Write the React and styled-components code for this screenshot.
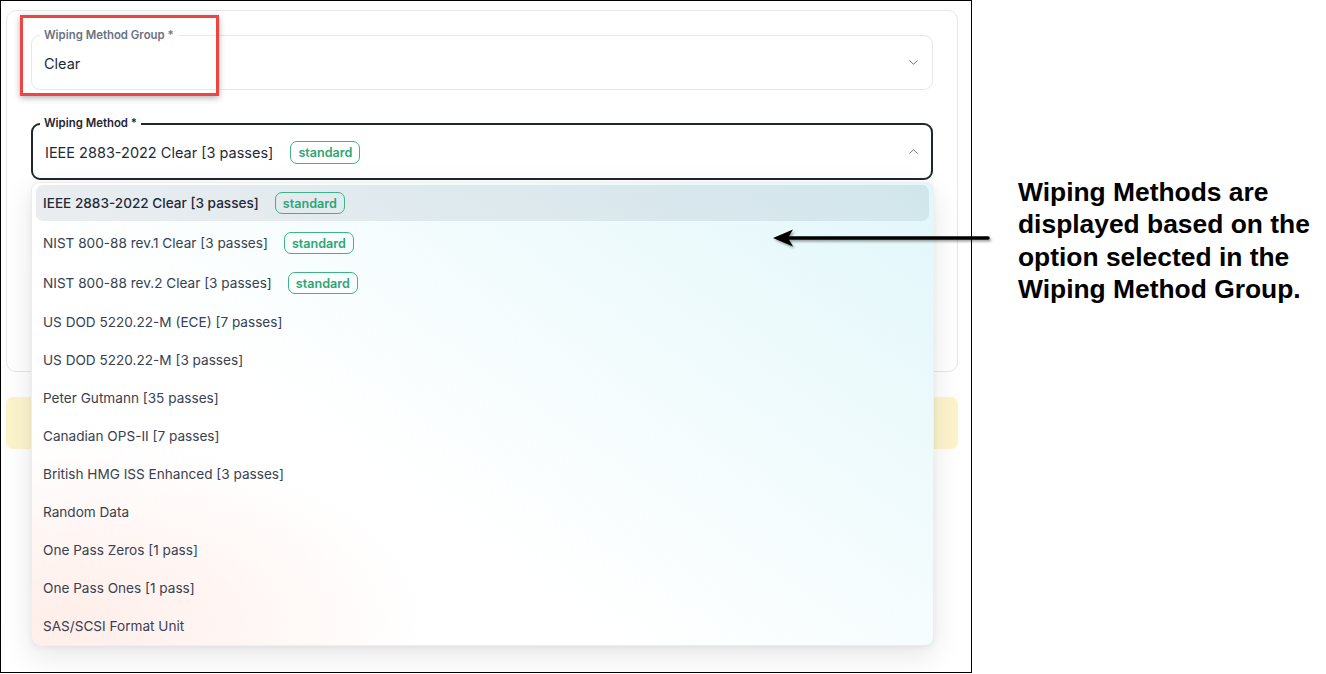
import React from "react";
import styled, { createGlobalStyle } from "styled-components";
import { ChevronDown, ChevronUp } from "lucide-react";

const Global = createGlobalStyle`
  html, body { margin: 0; padding: 0; background: #ffffff; }
  body { font-family: Inter, "Noto Sans", sans-serif; -webkit-font-smoothing: antialiased; }
  * { box-sizing: border-box; }
`;

const Page = styled.div`
  position: relative;
  width: 1326px;
  height: 674px;
  display: flex;
  align-items: flex-start;
  overflow: hidden;
`;

const Frame = styled.div`
  width: 972px;
  height: 673px;
  border: 1px solid #000;
  padding: 9px 13px 0 5px;
  display: flex;
  flex-direction: column;
  gap: 25px;
  overflow: hidden;
  background: #fff;
`;

const Card = styled.div`
  position: relative;
  border: 1px solid #e5e7eb;
  border-radius: 10px;
  padding: 24px 24px;
  min-height: 362px;
  display: flex;
  flex-direction: column;
  gap: 33px;
  background: #fff;
`;

const Field = styled.div`
  position: relative;
  height: ${(p) => (p.$active ? "57px" : "55px")};
  border: ${(p) => (p.$active ? "2px solid #1f2630" : "1px solid #e5e7eb")};
  border-radius: 9px;
  display: flex;
  align-items: center;
  padding: ${(p) => (p.$active ? "0 10px 0 12px" : "0 11px 0 12px")};
  background: #fff;
`;

const FieldLabel = styled.span`
  position: absolute;
  top: ${(p) => (p.$active ? "-9px" : "-8px")};
  left: ${(p) => (p.$active ? "7px" : "8px")};
  padding: 0 4px;
  background: #fff;
  font-size: 11.4px;
  font-weight: 600;
  line-height: 14px;
  color: ${(p) => (p.$active ? "#1f2630" : "#6b7280")};
`;

const ValueRow = styled.div`
  flex: 1;
  display: flex;
  align-items: center;
  gap: 17px;
  font-size: 14.5px;
  color: #1f2937;
  padding-top: 1px;
`;

const Badge = styled.span`
  display: inline-flex;
  align-items: center;
  height: ${(p) => (p.$large ? "23px" : "22px")};
  padding: 0 7px;
  border: 1px solid #3db386;
  border-radius: 7px;
  color: #2ea574;
  font-size: 12.6px;
  font-weight: 600;
`;

const Chevron = styled.span`
  display: flex;
  color: #6b7280;
`;

const Dropdown = styled.div`
  position: absolute;
  top: 57px;
  left: -2px;
  right: -3px;
  padding: 2px 4px 2px 4px;
  display: flex;
  flex-direction: column;
  gap: 4px;
  border-radius: 9px;
  background:
    linear-gradient(215deg, rgba(222, 246, 250, 0.9) 0%, rgba(232, 249, 251, 0.55) 35%, rgba(255, 255, 255, 0) 62%),
    radial-gradient(ellipse 55% 55% at 4% 95%, rgba(255, 232, 226, 0.75), rgba(255, 232, 226, 0) 72%),
    #ffffff;
  box-shadow: 0 10px 30px rgba(15, 23, 42, 0.1), 0 2px 6px rgba(15, 23, 42, 0.05);
  border: 1px solid rgba(229, 231, 235, 0.6);
  z-index: 5;
`;

const Option = styled.div`
  height: ${(p) => (p.$badge ? "36px" : "34px")};
  padding: 0 7px;
  display: flex;
  align-items: center;
  gap: 16px;
  border-radius: 7px;
  font-size: 13.6px;
  font-weight: ${(p) => (p.$selected ? 500 : 400)};
  color: ${(p) => (p.$selected ? "#1f2937" : "#374151")};
  background: ${(p) => (p.$selected ? "rgba(100, 116, 139, 0.13)" : "transparent")};
`;

const Alert = styled.div`
  height: 52px;
  border-radius: 7px;
  background: #fcf5cc;
`;

const Highlight = styled.div`
  position: absolute;
  left: 13px;
  top: 4px;
  width: 199px;
  height: 81px;
  border: 3px solid #ee4444;
  box-shadow: 0 2px 6px rgba(0, 0, 0, 0.3);
  pointer-events: none;
  z-index: 3;
`;

const Note = styled.p`
  margin: 176px 0 0 46px;
  font-family: "Liberation Sans", Arial, sans-serif;
  font-weight: 700;
  font-size: 26.4px;
  line-height: 32.4px;
  color: #000;
  white-space: nowrap;
`;

const ArrowSvg = styled.svg`
  position: absolute;
  left: 765px;
  top: 224px;
  overflow: visible;
  z-index: 10;
`;

const methods = [
  { name: "IEEE 2883-2022 Clear [3 passes]", std: true, selected: true },
  { name: "NIST 800-88 rev.1 Clear [3 passes]", std: true },
  { name: "NIST 800-88 rev.2 Clear [3 passes]", std: true },
  { name: "US DOD 5220.22-M (ECE) [7 passes]" },
  { name: "US DOD 5220.22-M [3 passes]" },
  { name: "Peter Gutmann [35 passes]" },
  { name: "Canadian OPS-II [7 passes]" },
  { name: "British HMG ISS Enhanced [3 passes]" },
  { name: "Random Data" },
  { name: "One Pass Zeros [1 pass]" },
  { name: "One Pass Ones [1 pass]" },
  { name: "SAS/SCSI Format Unit" },
];

export default function App() {
  return (
    <>
      <Global />
      <Page>
        <Frame>
          <Card>
            <Highlight />
            <Field>
              <FieldLabel>Wiping Method Group *</FieldLabel>
              <ValueRow>Clear</ValueRow>
              <Chevron>
                <ChevronDown size={15} strokeWidth={1.6} />
              </Chevron>
            </Field>
            <Field $active>
              <FieldLabel $active>Wiping Method *</FieldLabel>
              <ValueRow>
                IEEE 2883-2022 Clear [3 passes]
                <Badge $large>standard</Badge>
              </ValueRow>
              <Chevron>
                <ChevronUp size={15} strokeWidth={1.6} />
              </Chevron>
              <Dropdown>
                {methods.map((m) => (
                  <Option key={m.name} $badge={m.std} $selected={m.selected}>
                    {m.name}
                    {m.std && <Badge>standard</Badge>}
                  </Option>
                ))}
              </Dropdown>
            </Field>
          </Card>
          <Alert />
        </Frame>
        <Note>
          Wiping Methods are
          <br />
          displayed based on the
          <br />
          option selected in the
          <br />
          Wiping Method Group.
        </Note>
        <ArrowSvg width="230" height="30" viewBox="765 224 230 30">
          <defs>
            <filter id="sh" x="-10%" y="-50%" width="120%" height="200%">
              <feDropShadow dx="1.5" dy="2" stdDeviation="1.2" floodColor="#000" floodOpacity="0.35" />
            </filter>
          </defs>
          <g filter="url(#sh)">
            <line x1="988" y1="238" x2="785" y2="238" stroke="#000" strokeWidth="3.6" strokeLinecap="round" />
            <path d="M773 238 L793 229.5 L788 238 L793 246.5 Z" fill="#000" />
          </g>
        </ArrowSvg>
      </Page>
    </>
  );
}
